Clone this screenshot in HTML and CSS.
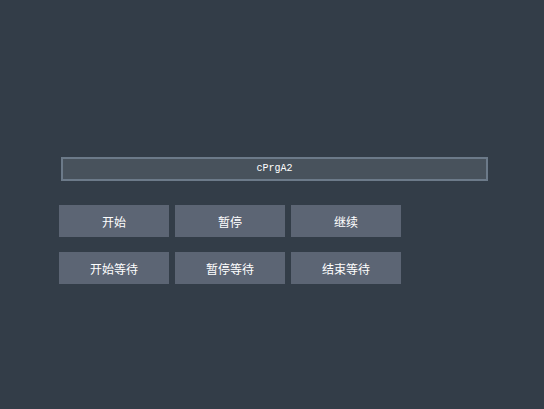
FILE: index.html
```html
<!DOCTYPE html>
<html lang="en">
<head>
  <meta charset="UTF-8" />
  <title>cPrgA2</title>
  <link rel="stylesheet" href="styles.css">
</head>
<body>
  <div class="panel">
    <div class="title-bar">cPrgA2</div>
    <div class="btn-row">
      <button>开始</button>
      <button>暂停</button>
      <button>继续</button>
    </div>
    <div class="btn-row">
      <button>开始等待</button>
      <button>暂停等待</button>
      <button>结束等待</button>
    </div>
  </div>
</body>
</html>
```
FILE: styles.css
```css
html, body {
  margin: 0;
  height: 100%;
}

body {
  background: #333d48;
  font-family: "Noto Sans CJK SC", sans-serif;
}

.panel {
  padding: 157px 0 0 59px;
}

.title-bar {
  width: 423px;
  height: 20px;
  margin-left: 2px;
  border: 2px solid #6c7a89;
  background: #48525c;
  color: #fff;
  font-family: "Liberation Mono", monospace;
  font-size: 10px;
  line-height: 20px;
  text-align: center;
  margin-bottom: 24px;
}

.btn-row {
  display: flex;
  gap: 6px;
  margin-bottom: 15px;
}

button {
  width: 110px;
  height: 32px;
  border: none;
  background: #5c6574;
  color: #fff;
  font-family: "Noto Sans CJK SC", sans-serif;
  font-size: 12px;
  padding: 0;
}
```
